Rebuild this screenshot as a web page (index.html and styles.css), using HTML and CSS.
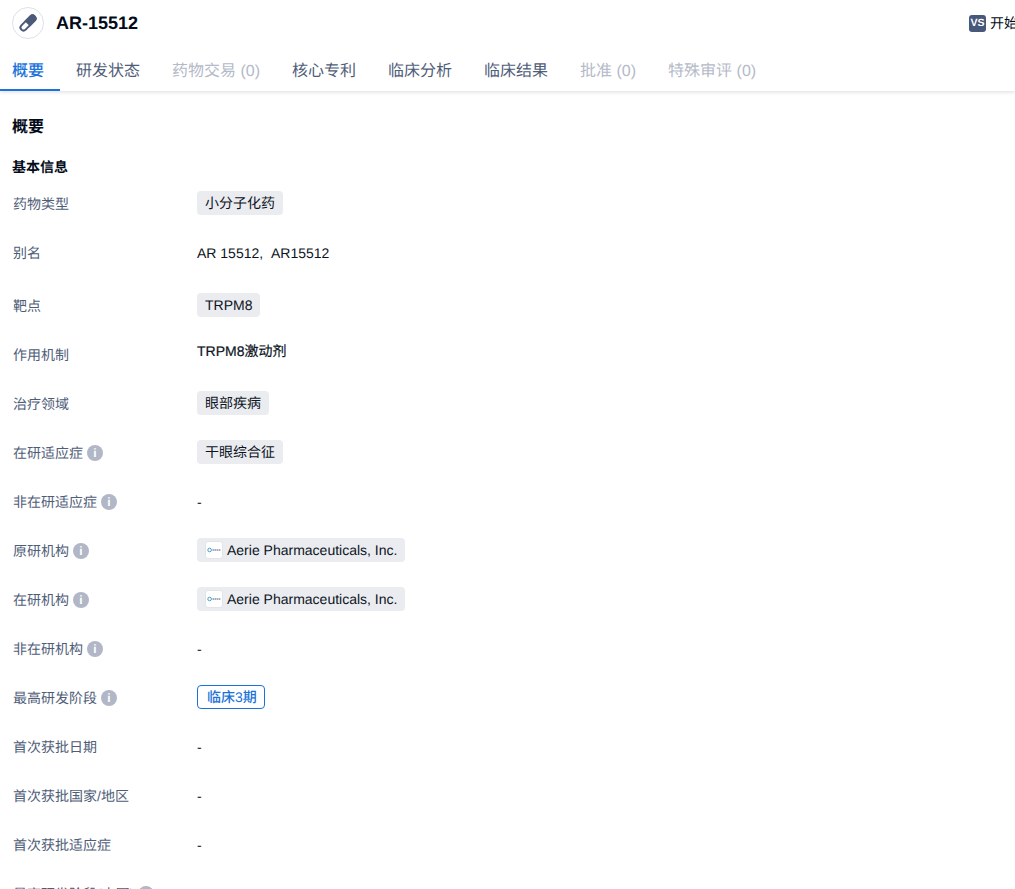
FILE: index.html
```html
<!DOCTYPE html>
<html lang="zh-CN">
<head>
<meta charset="utf-8">
<title>AR-15512</title>
<link rel="stylesheet" href="styles.css">
</head>
<body>
<div class="sticky">
  <header class="head">
    <div class="title-wrap">
      <span class="drug-icon">
        <svg viewBox="0 0 22 22" width="22" height="22"><g transform="rotate(-45 11 11)"><rect x="1.65" y="8" width="18.7" height="6" rx="3" fill="none" stroke="#4a5a78" stroke-width="2"/><path d="M10 7h7.35a4 4 0 0 1 0 8H10z" fill="#4a5a78"/></g></svg>
      </span>
      <h1 class="title">AR-15512</h1>
    </div>
    <div class="guide">
      <span class="vs">VS</span><span class="guide-text">开始比较</span>
    </div>
  </header>
  <nav class="tabs">
    <a class="tab tab-active">概要</a>
    <a class="tab">研发状态</a>
    <a class="tab tab-off">药物交易 (0)</a>
    <a class="tab">核心专利</a>
    <a class="tab">临床分析</a>
    <a class="tab">临床结果</a>
    <a class="tab tab-off">批准 (0)</a>
    <a class="tab tab-off">特殊审评 (0)</a>
  </nav>
</div>
<main class="content">
  <h2 class="h-main">概要</h2>
  <h3 class="h-sub">基本信息</h3>
  <dl class="rows">
    <div class="row"><dt class="label">药物类型</dt><dd class="value"><span class="tag">小分子化药</span></dd></div>
    <div class="row row-tall"><dt class="label">别名</dt><dd class="value">AR 15512,&nbsp;&nbsp;AR15512</dd></div>
    <div class="row"><dt class="label">靶点</dt><dd class="value"><span class="tag">TRPM8</span></dd></div>
    <div class="row"><dt class="label">作用机制</dt><dd class="value value-top">TRPM8激动剂</dd></div>
    <div class="row"><dt class="label">治疗领域</dt><dd class="value"><span class="tag">眼部疾病</span></dd></div>
    <div class="row"><dt class="label">在研适应症<i class="info">i</i></dt><dd class="value"><span class="tag">干眼综合征</span></dd></div>
    <div class="row"><dt class="label">非在研适应症<i class="info">i</i></dt><dd class="value">-</dd></div>
    <div class="row"><dt class="label">原研机构<i class="info">i</i></dt><dd class="value"><span class="tag"><span class="logo"><svg viewBox="0 0 16 16" width="16" height="16"><circle cx="3.6" cy="8" r="1.8" fill="none" stroke="#4a9cc9" stroke-width="1"/><path d="M6.5 8h8" stroke="#7f93a6" stroke-width="1.6" stroke-dasharray="1.6 .5"/></svg></span>Aerie Pharmaceuticals, Inc.</span></dd></div>
    <div class="row"><dt class="label">在研机构<i class="info">i</i></dt><dd class="value"><span class="tag"><span class="logo"><svg viewBox="0 0 16 16" width="16" height="16"><circle cx="3.6" cy="8" r="1.8" fill="none" stroke="#4a9cc9" stroke-width="1"/><path d="M6.5 8h8" stroke="#7f93a6" stroke-width="1.6" stroke-dasharray="1.6 .5"/></svg></span>Aerie Pharmaceuticals, Inc.</span></dd></div>
    <div class="row"><dt class="label">非在研机构<i class="info">i</i></dt><dd class="value">-</dd></div>
    <div class="row"><dt class="label">最高研发阶段<i class="info">i</i></dt><dd class="value"><span class="phase">临床3期</span></dd></div>
    <div class="row"><dt class="label">首次获批日期</dt><dd class="value">-</dd></div>
    <div class="row"><dt class="label">首次获批国家/地区</dt><dd class="value">-</dd></div>
    <div class="row"><dt class="label">首次获批适应症</dt><dd class="value">-</dd></div>
    <div class="row"><dt class="label">最高研发阶段(中国)<i class="info">i</i></dt><dd class="value">-</dd></div>
  </dl>
</main>
</body>
</html>
```
FILE: styles.css
```css
* { box-sizing: border-box; }
html, body { height: 889px; overflow: hidden; }
body {
  margin: 0;
  background: #fff;
  color: #030b1a;
  font-family: "Liberation Sans", "Noto Sans CJK SC", sans-serif;
  font-size: 14px;
  text-rendering: geometricPrecision;
}
.sticky { box-shadow: 0 1px 4px rgba(30, 40, 70, .16); background: #fff; }
.head {
  height: 49px;
  display: flex;
  align-items: center;
  justify-content: space-between;
  padding: 0 0 3px 12px;
  overflow: hidden;
  white-space: nowrap;
}
.title-wrap { display: flex; align-items: center; gap: 12px; }
.drug-icon {
  width: 32px; height: 32px;
  border: 1px solid #dfe1e8;
  border-radius: 50%;
  display: flex; align-items: center; justify-content: center;
}
.title { margin: 0; font-size: 18px; font-weight: 700; line-height: 24px; color: #030b1a; }
.guide { display: flex; align-items: center; gap: 4px; width: 46px; flex: none; overflow: hidden; font-size: 14px; }
.vs {
  flex: none;
  width: 17px; height: 17px;
  border-radius: 3px;
  background: #47587a;
  color: #fff;
  font-size: 10.5px;
  font-weight: 700;
  line-height: 17px;
  text-align: center;
}
.guide-text { flex: none; }
.tabs { display: flex; height: 42px; }
.tab {
  height: 42px;
  padding: 3px 16px 0;
  font-size: 16px;
  line-height: 40px;
  color: #4f5d78;
  white-space: nowrap;
}
.tab-active {
  padding: 3px 16px 0 12px;
  color: #1a73d9;
  font-weight: 500;
  border-bottom: 2px solid #1a73d9;
}
.tab-off { color: #b4bac8; }
.content { padding: 0 12px; }
.h-main { margin: 0; padding-top: 26px; font-size: 16px; font-weight: 700; line-height: 22px; }
.h-sub { margin: 0; padding-top: 17px; font-size: 14px; font-weight: 700; line-height: 22px; }
.rows { margin: 13px 0 0; padding-left: 1px; }
.row { display: grid; grid-template-columns: 184px 1fr; height: 49px; }
.row-tall { height: 53px; }
.label { display: flex; align-items: center; height: 26px; color: #4f5d78; line-height: 24px; white-space: nowrap; }
.value { margin: 0; min-height: 24px; line-height: 26px; color: #0c1424; }
.value-top { line-height: 18px; -webkit-text-stroke: .2px #0c1424; }
.tag {
  display: inline-flex;
  align-items: center;
  height: 24px;
  padding: 0 8px;
  border-radius: 4px;
  background: #ebecf0;
  color: #0c1424;
  vertical-align: top;
}
.logo {
  width: 18px; height: 18px;
  margin-right: 4px;
  border: 1px solid #e2e4ea;
  border-radius: 3px;
  background: #fff;
  display: flex; align-items: center; justify-content: center;
}
.logo svg { width: 16px; height: 16px; }
.phase {
  display: inline-block;
  width: 68px;
  height: 24px;
  padding: 0 9px;
  border: 1px solid #1a73d9;
  border-radius: 4px;
  color: #1a73d9;
  font-weight: 500;
  line-height: 22px;
  white-space: nowrap;
  vertical-align: top;
}
.info {
  width: 16px; height: 16px;
  margin-left: 4px;
  border-radius: 50%;
  background: #b1b7c6;
  color: #fff;
  font: 700 12px/16px "Liberation Sans", sans-serif;
  text-align: center;
}
```
